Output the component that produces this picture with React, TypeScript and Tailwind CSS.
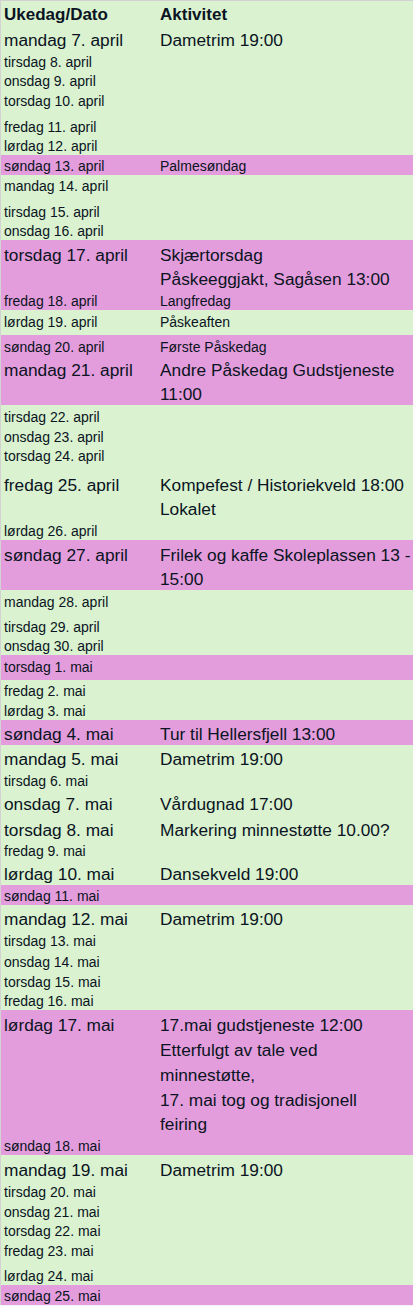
type Row = {
  d: string;
  a?: string;
  big?: boolean;
  pink?: boolean;
  h: string;
  pb?: string;
};

const rows: Row[] = [
  { d: "mandag 7. april", a: "Dametrim 19:00", big: true, h: "h-[26px]" },
  { d: "tirsdag 8. april", h: "h-[20px]" },
  { d: "onsdag 9. april", h: "h-[19px]" },
  { d: "torsdag 10. april", h: "h-[20px]" },
  { d: "fredag 11. april", h: "h-[26px]" },
  { d: "lørdag 12. april", h: "h-[19px]" },
  { d: "søndag 13. april", a: "Palmesøndag", pink: true, h: "h-[20px]" },
  { d: "mandag 14. april", h: "h-[20px]" },
  { d: "tirsdag 15. april", h: "h-[26px]" },
  { d: "onsdag 16. april", h: "h-[19px]" },
  { d: "torsdag 17. april", a: "Skjærtorsdag", big: true, pink: true, h: "h-[26px]" },
  { d: "", a: "Påskeeggjakt, Sagåsen 13:00", big: true, pink: true, h: "h-[24px]" },
  { d: "fredag 18. april", a: "Langfredag", pink: true, h: "h-[20px]" },
  { d: "lørdag 19. april", a: "Påskeaften", h: "h-[25px]", pb: "pb-[5px]" },
  { d: "søndag 20. april", a: "Første Påskedag", pink: true, h: "h-[21px]" },
  { d: "mandag 21. april", a: "Andre Påskedag Gudstjeneste", big: true, pink: true, h: "h-[25px]" },
  { d: "", a: "11:00", big: true, pink: true, h: "h-[24px]" },
  { d: "tirsdag 22. april", h: "h-[21px]" },
  { d: "onsdag 23. april", h: "h-[20px]" },
  { d: "torsdag 24. april", h: "h-[19px]" },
  { d: "fredag 25. april", a: "Kompefest / Historiekveld 18:00", big: true, h: "h-[31px]" },
  { d: "", a: "Lokalet", big: true, h: "h-[24px]" },
  { d: "lørdag 26. april", h: "h-[20px]" },
  { d: "søndag 27. april", a: "Frilek og kaffe Skoleplassen 13 -", big: true, pink: true, h: "h-[26px]" },
  { d: "", a: "15:00", big: true, pink: true, h: "h-[24px]" },
  { d: "mandag 28. april", h: "h-[21px]" },
  { d: "tirsdag 29. april", h: "h-[25px]" },
  { d: "onsdag 30. april", h: "h-[19px]" },
  { d: "torsdag 1. mai", pink: true, h: "h-[25px]", pb: "pb-[5px]" },
  { d: "fredag 2. mai", h: "h-[20px]" },
  { d: "lørdag 3. mai", h: "h-[20px]" },
  { d: "søndag 4. mai", a: "Tur til Hellersfjell 13:00", big: true, pink: true, h: "h-[25px]" },
  { d: "mandag 5. mai", a: "Dametrim 19:00", big: true, h: "h-[25px]" },
  { d: "tirsdag 6. mai", h: "h-[20px]" },
  { d: "onsdag 7. mai", a: "Vårdugnad 17:00", big: true, h: "h-[25px]" },
  { d: "torsdag 8. mai", a: "Markering minnestøtte 10.00?", big: true, h: "h-[26px]" },
  { d: "fredag 9. mai", h: "h-[19px]" },
  { d: "lørdag 10. mai", a: "Dansekveld 19:00", big: true, h: "h-[25px]" },
  { d: "søndag 11. mai", pink: true, h: "h-[20px]" },
  { d: "mandag 12. mai", a: "Dametrim 19:00", big: true, h: "h-[25px]" },
  { d: "tirsdag 13. mai", h: "h-[20px]" },
  { d: "onsdag 14. mai", h: "h-[21px]" },
  { d: "torsdag 15. mai", h: "h-[20px]" },
  { d: "fredag 16. mai", h: "h-[19px]" },
  { d: "lørdag 17. mai", a: "17.mai gudstjeneste 12:00", big: true, pink: true, h: "h-[26px]" },
  { d: "", a: "Etterfulgt av tale ved", big: true, pink: true, h: "h-[25px]" },
  { d: "", a: "minnestøtte,", big: true, pink: true, h: "h-[25px]" },
  { d: "", a: "17. mai tog og tradisjonell", big: true, pink: true, h: "h-[25px]" },
  { d: "", a: "feiring", big: true, pink: true, h: "h-[24px]" },
  { d: "søndag 18. mai", pink: true, h: "h-[20px]" },
  { d: "mandag 19. mai", a: "Dametrim 19:00", big: true, h: "h-[26px]" },
  { d: "tirsdag 20. mai", h: "h-[20px]" },
  { d: "onsdag 21. mai", h: "h-[20px]" },
  { d: "torsdag 22. mai", h: "h-[19px]" },
  { d: "fredag 23. mai", h: "h-[20px]" },
  { d: "lørdag 24. mai", h: "h-[25px]" },
  { d: "søndag 25. mai", pink: true, h: "h-[20px]" },
];

function ScheduleRow({ row }: { row: Row }) {
  const text = row.big
    ? "text-[17.3px] leading-[20px]"
    : "text-[14px] leading-[16px]";
  return (
    <div
      className={`flex items-end ${row.h} ${row.pb ?? "pb-[1px]"} ${
        row.pink ? "bg-[#e49ddc]" : ""
      }`}
    >
      <div className={`w-[159px] shrink-0 whitespace-nowrap pl-[3px] ${text}`}>
        {row.d}
      </div>
      <div className={`whitespace-nowrap ${text}`}>{row.a}</div>
    </div>
  );
}

export default function App() {
  return (
    <div className="w-[413px] bg-white font-['Liberation_Sans',Arial,sans-serif] text-[#0a1422]">
      <div className="flex flex-col border-t border-l border-[#d2d2d2] bg-[#daf2d0]">
        <div className="flex h-[24px] items-end pb-[1px] text-[17px] font-bold leading-[18px]">
          <div className="w-[159px] shrink-0 pl-[3px]">Ukedag/Dato</div>
          <div>Aktivitet</div>
        </div>
        {rows.map((r, i) => (
          <ScheduleRow key={i} row={r} />
        ))}
      </div>
      <div className="h-px bg-[#f4f4f4]" />
    </div>
  );
}
